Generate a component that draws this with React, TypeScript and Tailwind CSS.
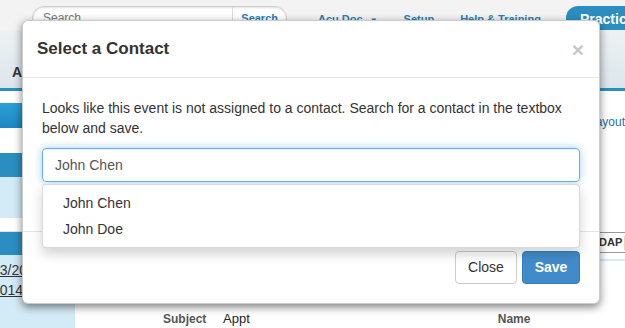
import { type ReactNode } from "react";

const Bar = ({ className }: { className: string }) => <div className={className} />;

const NavLink = ({ children }: { children: ReactNode }) => (
  <span className="text-[11px] font-bold text-[#2a7fb8]">{children}</span>
);

const TopBar = () => {
  return (
    <div className="flex h-[30px] items-start bg-[#f3f3f3] pt-[6px]">
      <div className="ml-[32px] flex h-[24px] w-[255px] items-center rounded-full border border-[#cfcfcf] bg-white shadow-[inset_0_1px_2px_rgba(0,0,0,0.12)]">
        <span className="flex-1 pl-[10px] text-[12px] text-[#777]">Search...</span>
        <span className="flex h-full items-center border-l border-[#dcdcdc] px-[8px] text-[11px] font-bold text-[#2a7fb8]">
          Search
        </span>
      </div>
      <div className="ml-[31px] flex items-center gap-[26px] pt-[5px]">
        <NavLink>
          Acu Doc <span className="ml-[4px] text-[8px]">▼</span>
        </NavLink>
        <NavLink>Setup</NavLink>
        <NavLink>Help &amp; Training</NavLink>
      </div>
      <div className="ml-auto h-[24px] w-[59px] overflow-hidden rounded-tl-[12px] bg-[#2a8fc0] pl-[14px] pt-[3px] text-[14px] font-bold whitespace-nowrap text-white">
        Practice
      </div>
    </div>
  );
};

const TabBar = () => {
  return (
    <div className="flex h-[61px] flex-col">
      <div className="flex flex-1 items-end bg-gradient-to-b from-[#eef1f3] to-[#dbe6ec] pb-[5px] pl-[12px]">
        <span className="text-[14px] font-bold text-[#333]">A</span>
      </div>
      <Bar className="h-[3px] bg-[#2a8fc0]" />
    </div>
  );
};

const LeftColumn = () => {
  return (
    <div className="flex w-[75px] flex-col">
      <Bar className="h-[12px] bg-white" />
      <Bar className="h-[25px] bg-gradient-to-b from-[#2d9fd6] to-[#1b87c0]" />
      <Bar className="h-[25px] bg-white" />
      <Bar className="h-[24px] bg-[#2a8fc0]" />
      <Bar className="h-[41px] bg-[#d3ebf6]" />
      <Bar className="h-[14px] border-b border-[#e2e2e2] bg-white" />
      <Bar className="h-[23px] bg-[#2a8fc0]" />
      <div className="flex flex-1 flex-col bg-[#d3ebf6] pt-[5px] text-[14px] leading-[20px] text-[#333]">
        <span className="-ml-[8px] whitespace-nowrap underline">03/2014</span>
        <span className="-ml-[8px] whitespace-nowrap underline">2014</span>
      </div>
    </div>
  );
};

const MainArea = () => {
  return (
    <div className="flex flex-1 flex-col">
      <div className="flex flex-1">
        <div className="flex-1" />
        <div className="flex w-[40px] flex-col items-end text-[12px] whitespace-nowrap">
          <span className="mt-[22px] text-[#2a6fa8]">Layout</span>
          <div className="mt-[101px] flex h-[21px] w-full items-center border-y border-[#999] pl-[14px] text-[11px] font-bold text-[#333]">
            DAP<span className="ml-[2px] h-[14px] w-[4px] bg-[#f0d9a0]" />
          </div>
          <Bar className="mt-[6px] h-[2px] w-full bg-[#d5ecf7]" />
        </div>
      </div>
      <div className="flex h-[22px] items-end pl-[88px] text-[12px]">
        <span className="w-[60px] font-bold text-[#555]">Subject</span>
        <span className="relative text-[13px] text-[#222]">
          Appt
          <Bar className="absolute -top-[14px] left-[20px] h-[2px] w-[46px] bg-black" />
        </span>
        <span className="ml-[248px] font-bold text-[#555]">Name</span>
      </div>
    </div>
  );
};

const Modal = () => {
  return (
    <div className="absolute top-[20px] left-[22px] w-[578px] rounded-[6px] border border-[rgba(0,0,0,0.2)] bg-white shadow-[0_3px_9px_rgba(0,0,0,0.5)]">
      <div className="flex items-center justify-between border-b border-[#e5e5e5] px-[14px] py-[15px]">
        <h4 className="text-[17px] leading-[26px] font-bold text-[#333]">Select a Contact</h4>
        <span className="pr-[1px] text-[21px] leading-none font-bold text-[#c8c8c8]">×</span>
      </div>
      <div className="relative px-[19px] pt-[20px] pb-[49px]">
        <p className="mb-[10px] text-[14px] leading-[20px] text-[#333]">
          Looks like this event is not assigned to a contact. Search for a contact in the textbox
          <br />
          below and save.
        </p>
        <div className="flex h-[34px] items-center rounded-[4px] border border-[#66afe9] px-[12px] text-[14px] text-[#555] shadow-[inset_0_1px_1px_rgba(0,0,0,0.075),0_0_8px_rgba(102,175,233,0.6)]">
          John Chen
        </div>
        <ul className="absolute top-[106px] right-[19px] left-[19px] z-10 rounded-[4px] border border-[rgba(0,0,0,0.15)] bg-white py-[5px] text-[14px] text-[#333] shadow-[0_6px_12px_rgba(0,0,0,0.175)]">
          <li className="h-[26px] px-[20px] leading-[26px]">John Chen</li>
          <li className="h-[26px] px-[20px] leading-[26px]">John Doe</li>
        </ul>
      </div>
      <div className="flex justify-end gap-[5px] border-t border-[#e5e5e5] px-[19px] pt-[19px] pb-[19px]">
        <button className="h-[33px] w-[62px] rounded-[4px] border border-[#ccc] bg-white text-[14px] text-[#333]">
          Close
        </button>
        <button className="h-[33px] w-[58px] rounded-[4px] border border-[#357ebd] bg-[#428bca] text-[14px] font-bold text-white">
          Save
        </button>
      </div>
    </div>
  );
};

const App = () => {
  return (
    <div className="relative flex h-[328px] w-[625px] flex-col overflow-hidden bg-white font-['Liberation_Sans',Arial,sans-serif]">
      <TopBar />
      <TabBar />
      <div className="flex flex-1">
        <LeftColumn />
        <MainArea />
      </div>
      <Modal />
    </div>
  );
};

export default App;
